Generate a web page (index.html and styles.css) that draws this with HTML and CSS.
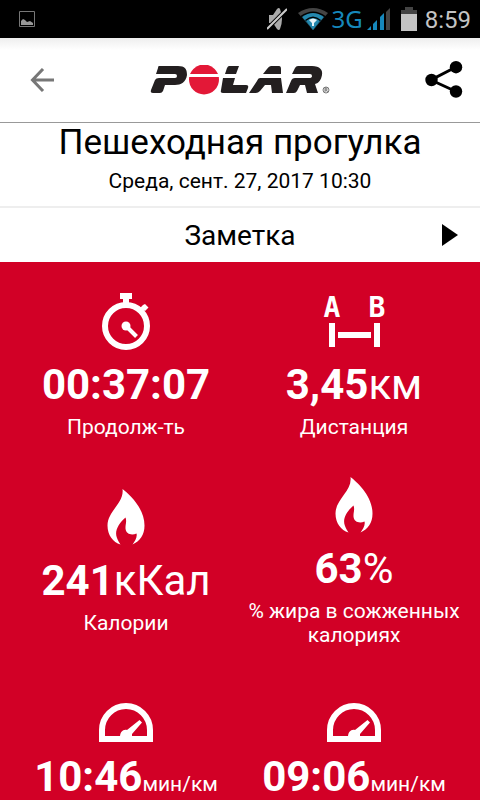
FILE: index.html
```html
<!DOCTYPE html>
<html lang="ru">
<head>
<meta charset="utf-8">
<meta name="viewport" content="width=device-width, initial-scale=1">
<title>Пешеходная прогулка</title>
<link rel="stylesheet" href="styles.css">
</head>
<body>
<svg class="defs" aria-hidden="true">
  <symbol id="flame" viewBox="0 0 38 56">
    <path fill="#fff" d="M15.500 0C22 5 37.500 19 37.500 36.500C37.500 46 33 52 25.500 55.500C28 52 30.500 48 29.500 44.500C25 46.500 19 45.500 18.500 39.500C18.300 35.500 20 32.500 18.500 28.500C12 34 7 42 10 49C11 52 12.500 54 13.500 55.500C6 53 .5 46.500 .5 36.500C.5 22 17.500 14 15.500 0Z"/>
  </symbol>
  <symbol id="gauge" viewBox="0 0 54 39">
    <path fill="none" stroke="#fff" stroke-width="6" d="M3 36V27A24 24 0 0 1 51 27V36Z"/>
    <path fill="#fff" d="M21 34C21 29 24 26 28 27L40.500 17L43 19.500L33 31V34Z"/>
  </symbol>
</svg>

<div class="status">
  <svg class="picture" viewBox="0 0 16 16" aria-hidden="true"><path fill="none" stroke="#777" d="M.5 .5H15.500V15.500H.5Z"/><path fill="#999" d="M2 14V10L4 8L6 9L8 11L11 10L14 12V14Z"/></svg>
  <div class="signals">
    <svg class="mute" viewBox="0 0 20 24" aria-hidden="true"><path fill="#aaa" d="M2 8H6L10 2Q12 0 13 2Q17 12 13 22Q12 24 10 22L6 16H2Z"/><path stroke="#000" stroke-width="4" d="M0 22L20 2"/><path stroke="#ccc" stroke-width="2" d="M0 22L20 2"/></svg>
    <svg class="wifi" viewBox="0 0 30 22" aria-hidden="true"><path fill="#444" d="M0 5Q15-5 30 5L15 22Z"/><path fill="#000" d="M2.500 8Q15-1 27.500 8L15 22Z"/><path fill="#2488ae" d="M4 9Q15 1 26 9L15 22Z"/><path fill="#000" d="M7 12Q15 5 23 12L15 22Z"/><path fill="#2488ae" d="M8 13Q15 7 22 13L15 22Z"/><path fill="#e8f4f8" d="M11 12Q15 9 19 12L16 15V18H14V15Z"/></svg>
    <span class="network">3G</span>
    <svg class="bars" viewBox="0 0 24 22" aria-hidden="true"><path fill="#1688bc" d="M0 22L4 18V22ZM6 22V16L10 12V22ZM13 22V9L17 5V22Z"/><path fill="#444" d="M19 22V4L23 0V22Z"/></svg>
    <svg class="battery" viewBox="0 0 16 24" aria-hidden="true"><path fill="#444" d="M4 0H12V3H16V7H0V3H4Z"/><path fill="#c4c4c4" d="M0 7H16V24H0Z"/></svg>
    <time class="clock">8:59</time>
  </div>
</div>

<header class="toolbar">
  <button class="tool" type="button" aria-label="Назад">
    <svg class="back" viewBox="0 0 24 24" aria-hidden="true"><path fill="none" stroke="#777" stroke-width="3" d="M13 1L2.500 12L13 23M2 12H24"/></svg>
  </button>
  <svg class="logo" viewBox="0 0 180 30" role="img" aria-label="Polar">
    <g fill="#231f20">
      <path d="M9 1H28C35 1 37 4 37 10C36 17 31 20 25 20H15L13 26Q12 28 10 28H3Q0 28 1 25L5 15Q6 13 9 13H25Q27 13 27 11Q27 9 25 9H6L8 3Q8 1 9 1Z"/>
      <path d="M79 1H89L86 9H75L77 3Q78 1 79 1ZM73 13H85L83 20H96Q99 20 98 23L96 28H73Q70 28 71 25Z"/>
      <path d="M121 1H129Q131 1 131 4V9H113L117 4Q119 1 121 1ZM110 13H131L133 28H122L121 20H115L110 26Q108 28 106 28H99L107 16Q108 13 110 13Z"/>
      <path d="M148 1H162C170 1 173 5 172 10C171 15 169 18 165 19L168 28H157L155 20H150L147 26Q146 28 144 28H136L141 16Q142 13 145 13H159Q162 13 162 11Q162 9 160 9H142L145 3Q146 1 148 1Z"/>
    </g>
    <circle cx="54" cy="14.500" r="15" fill="#e31837"/>
    <path stroke="#fff" stroke-width="3" d="M38 10.500H70"/>
    <circle cx="176" cy="25" r="3" fill="none" stroke="#555" stroke-width=".8"/>
    <path fill="none" stroke="#555" stroke-width=".8" d="M175 27V23H176.500Q178 24 176.500 25H175M176.500 25L177.500 27"/>
  </svg>
  <button class="tool" type="button" aria-label="Поделиться">
    <svg class="share" viewBox="0 0 38 38" aria-hidden="true"><path fill="none" stroke="#000" stroke-width="3" d="M31 6L6 19L31 30.500"/><circle cx="31" cy="6.200" r="6.200"/><circle cx="6.500" cy="19" r="6.200"/><circle cx="31" cy="30.500" r="6.200"/></svg>
  </button>
</header>

<main class="content">
  <section class="heading">
    <h1>Пешеходная прогулка</h1>
    <p>Среда, сент. 27, 2017 10:30</p>
  </section>
  <button class="note" type="button">
    <span>Заметка</span>
    <svg viewBox="0 0 16 22" aria-hidden="true"><path d="M0 0L16 11L0 22Z"/></svg>
  </button>
  <section class="stats">
    <div class="stat">
      <div class="icon"><svg class="watch" viewBox="0 0 48 58" aria-hidden="true"><circle cx="24" cy="34" r="21" fill="none" stroke="#fff" stroke-width="6"/><path fill="#fff" d="M18 1H30V7H27V13H21V7H18ZM38 16L41 13L43 12L46.500 15.500L43 19Z"/><circle cx="24" cy="34" r="4.500" fill="#fff"/><path stroke="#fff" stroke-width="4" d="M24 34L34.500 44.500"/></svg></div>
      <div class="value"><b>00:37:07</b></div>
      <div class="label">Продолж-ть</div>
    </div>
    <div class="stat">
      <div class="icon"><svg class="distance" viewBox="0 0 64 62" aria-hidden="true"><text x="10" y="27">A</text><text x="55" y="27">B</text><path fill="#fff" d="M7 33H13V57H7ZM16 42H49V48H16ZM52 33H58V57H52Z"/></svg></div>
      <div class="value"><b>3,45</b>км</div>
      <div class="label">Дистанция</div>
    </div>
    <div class="stat">
      <div class="icon"><svg class="flame" aria-hidden="true"><use href="#flame"/></svg></div>
      <div class="value"><b>241</b>кКал</div>
      <div class="label">Калории</div>
    </div>
    <div class="stat">
      <div class="icon"><svg class="flame" aria-hidden="true"><use href="#flame"/></svg></div>
      <div class="value"><b>63</b>%</div>
      <div class="label">% жира в сожженных калориях</div>
    </div>
    <div class="stat">
      <div class="icon low"><svg class="gauge" aria-hidden="true"><use href="#gauge"/></svg></div>
      <div class="value"><b>10:46</b><small>мин/км</small></div>
    </div>
    <div class="stat">
      <div class="icon low"><svg class="gauge" aria-hidden="true"><use href="#gauge"/></svg></div>
      <div class="value"><b>09:06</b><small>мин/км</small></div>
    </div>
  </section>
</main>
</body>
</html>
```
FILE: styles.css
```css
* { box-sizing: border-box; margin: 0; padding: 0; }

body {
  display: flex;
  flex-direction: column;
  height: 100vh;
  overflow: hidden;
  background: #fff;
  color: #000;
  font-family: Roboto, "Noto Sans", sans-serif;
}

button { border: 0; background: none; font: inherit; color: inherit; cursor: pointer; }
svg { display: block; flex: none; }
.defs { position: absolute; width: 0; height: 0; }

.status {
  display: flex;
  flex: none;
  justify-content: space-between;
  align-items: center;
  height: 38px;
  padding: 0 9px 0 19px;
  background: #000;
}
.picture { width: 16px; height: 16px; }
.signals { display: flex; align-items: center; }
.mute { width: 20px; height: 24px; margin-right: 11px; }
.wifi { width: 30px; height: 22px; margin-right: 4px; }
.network { color: #1688bc; font-family: "Noto Sans", sans-serif; font-size: 24px; line-height: 36px; }
.bars { width: 24px; height: 22px; margin: 0 10px 0 4px; }
.battery { width: 16px; height: 24px; margin-right: 8px; }
.clock { padding-top: 2px; color: #c4c4c4; font-size: 24px; line-height: 36px; }

.toolbar {
  display: flex;
  flex: none;
  justify-content: space-between;
  align-items: center;
  height: 85px;
  padding: 0 16px;
  border-bottom: 1px solid #999;
  background: linear-gradient(#eee, #fff 12px);
}
.tool { display: flex; align-items: center; justify-content: center; width: 40px; height: 56px; }
.back { width: 24px; height: 24px; margin-left: 12px; }
.share { width: 38px; height: 38px; }
.logo { width: 180px; height: 30px; }

.content { display: flex; flex: 1 0 auto; flex-direction: column; }
.heading { padding-bottom: 12px; border-bottom: 2px solid #eee; text-align: center; }
.heading h1 { margin-bottom: 6px; font-size: 35px; font-weight: 400; line-height: 40px; }
.heading p { font-size: 21px; line-height: 25px; }

.note {
  display: grid;
  grid-template-columns: 1fr auto 1fr;
  align-items: center;
  height: 54px;
  padding: 0 22px;
  font-size: 28px;
}
.note span { grid-column: 2; }
.note svg { width: 16px; height: 22px; justify-self: end; }

.stats {
  display: grid;
  flex: 1;
  grid-template-columns: 1fr 1fr;
  row-gap: 35px;
  align-content: start;
  align-items: center;
  padding: 28px 12px 0;
  background: #d20026;
  color: #fff;
  text-align: center;
}
.icon { display: flex; justify-content: center; align-items: center; height: 62px; }
.icon.low { align-items: flex-end; padding-bottom: 2px; }
.watch { width: 48px; height: 58px; }
.distance { width: 64px; height: 62px; overflow: visible; }
.distance text { fill: #fff; font-family: "DejaVu Sans Mono", monospace; font-size: 28px; font-weight: 700; text-anchor: middle; }
.flame { width: 38px; height: 56px; }
.gauge { width: 54px; height: 39px; }
.value { margin-top: 8px; font-size: 42px; line-height: 50px; white-space: nowrap; }
.value small { font-size: 21px; }
.label { margin-top: 5px; font-size: 21px; line-height: 24px; }
```
